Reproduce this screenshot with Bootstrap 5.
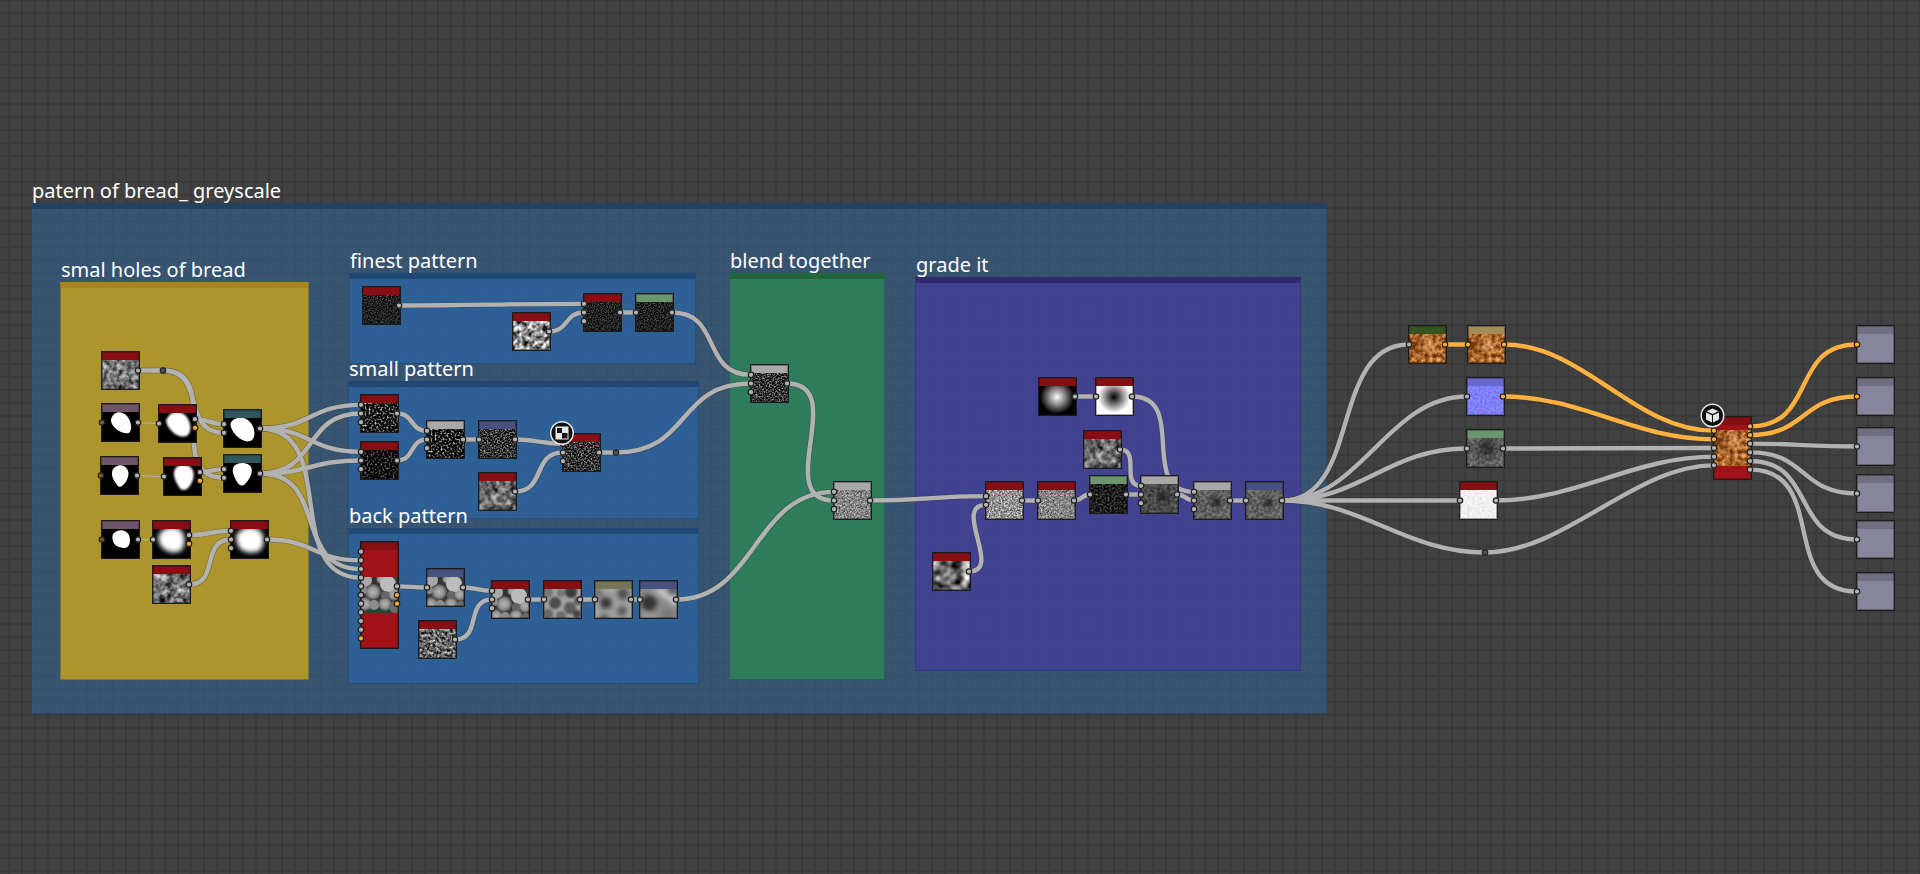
<!DOCTYPE html>
<html lang="en">
<head>
<meta charset="utf-8">
<meta name="viewport" content="width=device-width, initial-scale=1">
<title>Bread material graph</title>
<link href="https://cdn.jsdelivr.net/npm/bootstrap@5.3.0/dist/css/bootstrap.min.css" rel="stylesheet">
<style>
  body { background: #414141; font-family: "Noto Sans", "Open Sans", sans-serif; }
  .graph {
    min-height: 100vh;
    background-color: #414141;
    background-image:
      linear-gradient(90deg, #3a3a3a 2px, transparent 2px),
      linear-gradient(#3a3a3a 2px, transparent 2px);
    background-size: 13px 13px;
    background-position: 8px 12px;
  }
  .graph-frame { position: absolute; }
  .graph-frame h2 {
    position: absolute; bottom: 100%; left: 1px;
    font-size: 20px; line-height: 24px; color: #fff; white-space: nowrap;
    font-weight: 400;
  }
  .frame-body { background: var(--fill); border: 1px solid rgba(20, 40, 70, .3); border-top: 6px solid var(--head); }
  .tone-outer  { --fill: rgba(46, 104, 162, .5); --head: #24415f; }
  .tone-blue   { --fill: rgba(41, 105, 173, .6); --head: #1f4974; }
  .tone-yellow { --fill: rgba(202, 165, 29, .8); --head: #a68716; }
  .tone-green  { --fill: rgba(44, 143, 84, .7);  --head: #23663c; }
  .tone-purple { --fill: rgba(68, 62, 154, .8);  --head: #30296f; }
  .wire-layer { position: absolute; inset: 0; width: 100%; height: 100%; pointer-events: none; }
  .graph-node { position: absolute; width: 39px; border: 1px solid #1c1c1c; outline: 1px solid rgba(20, 20, 20, .35); outline-offset: -2px; }
  .node-head { height: 8px; }
  .node-view { height: 29px; }
  .node-view svg { display: block; width: 100%; height: 100%; }
  .node-tall { background: #a31218; }
  .node-tall .node-view { height: 36px; }
</style>
</head>
<body>
<main class="graph position-relative overflow-hidden" id="graph">
  <svg width="0" height="0" class="position-absolute" aria-hidden="true"><defs id="filters">
    <filter id="soft1" x="-50%" y="-50%" width="200%" height="200%"><feGaussianBlur stdDeviation="0.5"/></filter>
    <filter id="soft2" x="-50%" y="-50%" width="200%" height="200%"><feGaussianBlur stdDeviation="1"/></filter>
    <filter id="soft3" x="-50%" y="-50%" width="200%" height="200%"><feGaussianBlur stdDeviation="2.4"/></filter>
    <radialGradient id="ball"><stop offset="0" stop-color="#fff"/><stop offset="1" stop-color="#000"/></radialGradient>
    <radialGradient id="hole"><stop offset="0" stop-color="#000"/><stop offset="1" stop-color="#fff"/></radialGradient>
    <radialGradient id="bump"><stop offset="0" stop-color="#b4b4b4"/><stop offset=".6" stop-color="#949494"/><stop offset="1" stop-color="#4c4c4c"/></radialGradient>
    <radialGradient id="dusk"><stop offset="0" stop-color="#111" stop-opacity=".7"/><stop offset="1" stop-color="#111" stop-opacity="0"/></radialGradient>
  </defs></svg>
</main>

<script src="https://cdn.jsdelivr.net/npm/bootstrap@5.3.0/dist/js/bootstrap.bundle.min.js"></script>
<script>
const graph = document.getElementById('graph');
const R = '#870f14';

/* frames: title, tone, left, top, width, height */
const frames = [
  ['patern of bread_ greyscale', 'outer', 31, 203, 1296, 511],
  ['smal holes of bread', 'yellow', 60, 282, 249, 398],
  ['finest pattern', 'blue', 349, 273, 347, 91],
  ['small pattern', 'blue', 348, 381, 351, 138],
  ['back pattern', 'blue', 348, 528, 351, 156],
  ['blend together', 'green', 729, 273, 156, 407],
  ['grade it', 'purple', 915, 277, 386, 394]
];
for (const [title, tone, x, y, w, h] of frames) {
  graph.insertAdjacentHTML('beforeend',
    `<section class="graph-frame tone-${tone}" style="left:${x}px;top:${y}px;width:${w}px;height:${h}px">
       <h2 class="m-0">${title}</h2><div class="frame-body h-100"></div></section>`);
}

/* noise textures: base frequency, octaves, gain, mean grey, seed */
const noises = {
  cloud:   [.2, 4, 1.1, .45, 3],
  cloud2:  [.14, 4, 1.4, .45, 8],
  cloud3:  [.16, 4, 1.1, .42, 21],
  fine:    [.35, 4, 1.4, .4, 5],
  patch:   [.2, 2, 1.9, .55, 11],
  large:   [.1, 2, 1.7, .45, 4],
  dust:    [.7, 2, .7, .13, 2],
  spark:   [.5, 2, 2.4, .1, 6],
  sparkLo: [.5, 2, 1.5, .05, 9],
  spots:   [.6, 2, 1.6, .2, 7],
  grain:   [.6, 3, 1.1, .58, 12],
  grainLo: [.6, 3, .95, .52, 14],
  night:   [.5, 4, .8, .12, 15],
  slate:   [.3, 4, .45, .3, 16],
  slateHi: [.3, 4, .45, .38, 18],
  paper:   [.4, 3, .2, .94, 19]
};
const filters = document.getElementById('filters');
const addNoise = (id, freq, oct, seed, matrix) => filters.insertAdjacentHTML('beforeend',
  `<filter id="${id}" x="0" y="0" width="100%" height="100%" color-interpolation-filters="sRGB">
     <feTurbulence type="fractalNoise" baseFrequency="${freq}" numOctaves="${oct}" seed="${seed}"/>
     <feColorMatrix values="${matrix}"/></filter>`);
for (const [id, [f, o, g, mean, s]] of Object.entries(noises)) {
  const row = `${g} 0 0 0 ${mean - g / 2} `;
  addNoise(id, f, o, s, row + row + row + '0 0 0 0 1');
}
addNoise('crust', .25, 5, 24, '.9 0 0 0 .22  .85 0 0 0 -.02  .7 0 0 0 -.17  0 0 0 0 1');
addNoise('normal', .5, 2, 25, '.4 0 0 0 .3  0 .4 0 0 .3  0 0 0 0 .97  0 0 0 0 1');

const tex = (id, over = '') => `<rect width="37" height="36" filter="url(#${id})"/>${over}`;
const shape = (d, f) => `<rect width="37" height="29"/><path d="${d}" fill="#fff" ${f ? `filter="url(#${f})"` : ''}/>`;
const vig = (x, y, r) => `<circle cx="${x}" cy="${y}" r="${r}" fill="url(#dusk)"/>`;
const discs = (list, f) => `<g filter="url(#${f})">` + list.map(([x, y, r, c]) =>
  `<circle cx="${x}" cy="${y}" r="${r}" fill="${c || 'url(#bump)'}"/>`).join('') + '</g>';
const bumps = '<rect width="37" height="36" fill="#3a3a3a"/>' + discs([
  [4, 3, 7, '#a8a8a8'], [15, 4, 4, '#303030'], [33, 17, 7], [20, 2, 5], [4, 27, 7], [12, 15, 8],
  [24, 27, 7], [27, 7, 8, '#bcbcbc'], [13, 28, 5, '#8c8c8c'], [34, 30, 6, '#6c6c6c'],
  [2, 13, 4, '#8a8a8a'], [24, 18, 4, '#666']], 'soft1');
const views = {
  tilt: shape('M10 5C13-1 20-1 25 4C29 9 31 17 27 21C23 22 17 20 13 16C9 12 8 8 10 5Z'),
  tiltSoft: shape('M9 4C13-3 22-2 27 3C32 9 33 18 29 22C24 26 15 22 11 16C7 11 6 7 9 4Z', 'soft2'),
  tiltEdge: shape('M8 3C13-2 22-1 26 4C31 9 32 19 28 22C23 26 15 21 11 16C7 11 5 6 8 3Z', 'soft1'),
  drop: shape('M12 4C16-1 23-1 26 4C29 8 27 14 24 18C21 22 18 23 16 20C13 16 9 10 12 4Z'),
  dropSoft: shape('M11 3C15-3 25-2 28 3C32 9 28 18 25 21C22 25 17 25 15 21C12 16 8 9 11 3Z', 'soft2'),
  dropEdge: shape('M10 3C14-1 24-1 27 4C30 10 24 18 21 21C18 24 15 22 13 19C10 13 7 8 10 3Z', 'soft1'),
  dome: shape('M12 4C16 0 24 0 27 6C29 12 28 18 23 19C18 19 12 17 11 12C10 8 10 6 12 4Z'),
  domeSoft: shape('M8 3C14-4 26-3 30 4C33 11 32 21 25 23C17 25 8 20 6 13C5 8 5 6 8 3Z', 'soft3'),
  domeWide: shape('M8 3C14-4 26-3 31 4C34 11 33 21 26 23C17 25 7 22 6 13C4 8 5 6 8 3Z', 'soft3'),
  ball: '<rect width="37" height="29"/><circle cx="18" cy="11" r="17" fill="url(#ball)"/>',
  hole: '<rect width="37" height="29" fill="#fff"/><circle cx="18" cy="11" r="16" fill="url(#hole)"/>',
  bumps,
  webs: '<rect width="37" height="29" fill="#a0a0a0"/>' + discs([[3, 3, 6, '#777'], [11, 14, 6, '#4d4d4d'], [27, 3, 6, '#3c3c3c'], [26, 19, 6, '#5a5a5a'], [4, 25, 5, '#666'], [17, 27, 5, '#6c6c6c'], [34, 12, 4, '#5a5a5a'], [33, 25, 4, '#444'], [17, 4, 4, '#777']], 'soft2'),
  haze: '<rect width="37" height="29" fill="#a2a2a2"/>' + discs([[1, 4, 7, '#777'], [11, 14, 6, '#333'], [28, 5, 6, '#4d4d4d'], [27, 22, 5, '#555'], [9, 29, 4, '#555']], 'soft3'),
  fog: '<rect width="37" height="29" fill="#8a8a8a"/><g filter="url(#soft3)"><path d="M12 0L37 18V8L24 0ZM0 25L20 29H10Z" fill="#ccc"/><circle cx="9" cy="14" r="8" fill="#333"/><circle cx="32" cy="2" r="5" fill="#555"/><circle cx="28" cy="26" r="6" fill="#777"/></g>',
  slateA: tex('slate', vig(22, 13, 10)),
  slateB: tex('slateHi', vig(22, 12, 9)),
  slateC: tex('slateHi', vig(22, 13, 8)),
  pit: tex('slateHi', vig(20, 10, 15)),
  crustA: tex('crust', '<circle cx="6" cy="13" r="8" fill="#5a2400" opacity=".4" filter="url(#soft3)"/><circle cx="20" cy="12" r="7" fill="#ffc890" opacity=".35" filter="url(#soft3)"/>'),
  none: ''
};

/* port spacing is one third of 26 */
const STEP = 26 / 3, MID = 19.5;
/* nodes: id, x, y, header, view, input colours, output colours (g grey, o orange, b brown) */
const nodes = [
  ['a', 101, 351, R, 'cloud', '', 'g'],
  ['b1', 101, 403, '#6e5468', 'tilt', 'b', 'g'],
  ['c1', 158, 404, R, 'tiltSoft', 'g', 'go'],
  ['d1', 223, 409, '#2f575b', 'tiltEdge', 'gg', 'g'],
  ['b2', 100, 456, '#6e5468', 'drop', 'b', 'g'],
  ['c2', 163, 457, R, 'dropSoft', 'g', 'go'],
  ['d2', 223, 454, '#2f575b', 'dropEdge', 'gg', 'g'],
  ['b3', 101, 520, '#6e5468', 'dome', 'b', 'g'],
  ['c3', 152, 520, R, 'domeSoft', 'g', 'go'],
  ['e', 230, 520, R, 'domeWide', 'ggg', 'g'],
  ['f', 152, 565, R, 'cloud2', '', 'g'],
  ['g', 362, 286, R, 'dust', '', 'g'],
  ['h', 512, 312, R, 'patch', '', 'g'],
  ['i', 583, 293, R, 'dust', 'ggg', 'g'],
  ['j', 635, 293, '#6d956e', 'dust', 'g', 'g'],
  ['k', 360, 394, R, 'spark', 'ggg', 'g'],
  ['l', 360, 441, R, 'sparkLo', 'ggg', 'g'],
  ['m', 426, 420, '#a8a8a8', 'spark', 'ggg', 'g'],
  ['n', 478, 420, '#475280', 'spots', 'g', 'g'],
  ['o', 478, 472, R, 'cloud3', '', 'g'],
  ['p', 562, 433, R, 'spots', 'ggg', 'g'],
  ['q', 360, 541, '#850f13', 'bumps', 'ggggggggggo', 'goo', 108],
  ['r', 426, 568, '#475280', 'bumps', 'g', 'g'],
  ['s', 418, 620, R, 'fine', '', 'g'],
  ['t', 491, 580, R, 'bumps', 'ggg', 'g'],
  ['u', 543, 580, R, 'webs', 'g', 'g'],
  ['v', 594, 580, '#78745a', 'haze', 'g', 'g'],
  ['w', 639, 580, '#475280', 'fog', 'g', 'g'],
  ['x', 750, 364, '#a8a8a8', 'spots', 'ggg', 'g'],
  ['y', 833, 481, '#a8a8a8', 'grainLo', 'ggg', 'g'],
  ['z', 985, 481, R, 'grain', 'gg', 'g'],
  ['aa', 1037, 481, R, 'grainLo', 'g', 'g'],
  ['ab', 1089, 475, '#6d956e', 'night', 'g', 'g'],
  ['ac', 1140, 475, '#a8a8a8', 'slateA', 'ggg', 'g'],
  ['ad', 1193, 481, '#a8a8a8', 'slateB', 'ggg', 'g'],
  ['ae', 1245, 481, '#475280', 'slateC', 'g', 'g'],
  ['af', 932, 552, R, 'large', '', 'g'],
  ['ag', 1083, 430, R, 'cloud3', '', 'g'],
  ['ah', 1038, 377, R, 'ball', '', 'g'],
  ['ai', 1095, 377, R, 'hole', 'g', 'g'],
  ['ba', 1408, 325, '#35541f', 'crustA', 'g', 'o'],
  ['bb', 1467, 325, '#a48c58', 'crustA', 'o', 'o'],
  ['bc', 1466, 377, '#6868cf', 'normal', 'g', 'o'],
  ['bd', 1466, 429, '#6d956e', 'pit', 'g', 'g'],
  ['be', 1459, 481, R, 'paper', 'g', 'g'],
  ['ca', 1713, 416, '#850f13', 'crustA', 'ooggg', 'oogggg', 64],
  ['o1', 1856, 325, '#706f82', 'none', 'o', ''],
  ['o2', 1856, 377, '#706f82', 'none', 'o', ''],
  ['o3', 1856, 427, '#706f82', 'none', 'g', ''],
  ['o4', 1856, 474, '#706f82', 'none', 'g', ''],
  ['o5', 1856, 520, '#706f82', 'none', 'g', ''],
  ['o6', 1856, 572, '#706f82', 'none', 'g', '']
];

const port = {};
const ports = [];
const place = (id, side, kinds, x, mid) => [...kinds].forEach((kind, i) => {
  const y = mid + (i - (kinds.length - 1) / 2) * STEP;
  port[id + side + (i + 1)] = [x, y];
  ports.push([x, y, kind]);
});
let nodeHtml = '';
for (const [id, x, y, head, view, ins, outs, tall] of nodes) {
  const mid = y + (tall ? tall / 2 : MID);
  place(id, '<', ins, x + 1, mid);
  place(id, '>', outs, x + 37, id === 'q' ? mid : mid);
  const svg = views[view] ?? tex(view);
  const flow = tall ? ' node-tall d-flex flex-column justify-content-between' : '';
  nodeHtml += `<div class="graph-node${flow}" style="left:${x}px;top:${y}px;${tall ? `height:${tall}px;` : ''}${view === 'none' ? 'background:#87859b;' : ''}">
    <div class="node-head" style="background:${head}"></div>
    <div class="node-view"><svg viewBox="0 0 37 ${tall ? 36 : 29}" aria-hidden="true">${svg}</svg></div>
    ${tall ? '<div class="node-head"></div>' : ''}</div>`;
}
/* loose relay dots on the wires */
for (const [id, x, y] of [['dotA', 163, 370.5], ['dotB', 616, 452.5], ['dotC', 1485, 552.5]]) {
  port[id] = [x, y];
  ports.push([x, y, 'd']);
}

const links = `a>1 dotA; dotA d1<2; dotA d2<2; c1>1 d1<1; c2>1 d2<1; c3>1 e<1; f>1 e<2;
  d1>1 k<1; d1>1 l<1; d1>1 q<4; d2>1 k<2; d2>1 l<2; d2>1 q<3; e>1 q<2;
  g>1 i<1; h>1 i<2; i>1 j<1; j>1 x<1; k>1 m<1; l>1 m<2; m>1 n<1; n>1 p<1; o>1 p<2; p>1 dotB; dotB x<2;
  q>1 r<1; r>1 t<1; s>1 t<2; t>1 u<1; u>1 v<1; v>1 w<1; w>1 y<1; x>1 y<2; y>1 z<1; af>1 z<2;
  z>1 aa<1; aa>1 ab<1; ab>1 ac<2; ag>1 ac<1; ac>1 ad<2; ai>1 ad<1; ah>1 ai<1; ad>1 ae<1;
  ae>1 ba<1; ae>1 bc<1; ae>1 bd<1; ae>1 be<1; ae>1 dotC; ba>1 bb<1 o; bb>1 ca<1 o; bc>1 ca<2 o;
  bd>1 ca<3; be>1 ca<4; dotC ca<5; ca>1 o1<1 o; ca>2 o2<1 o; ca>3 o3<1; ca>4 o4<1; ca>5 o5<1; ca>6 o6<1;
  b1>1 c1<1 t; b2>1 c2<1 t; b3>1 c3<1 t`;
let shade = '', line = '';
for (const link of links.split(';')) {
  const [from, to, kind] = link.trim().split(' ');
  const [x1, y1] = port[from], [x2, y2] = port[to];
  const c = Math.min(80, Math.hypot(x2 - x1, y2 - y1) / 2);
  const d = `M${x1} ${y1}C${x1 + c} ${y1} ${x2 - c} ${y2} ${x2} ${y2}`;
  const thin = kind === 't';
  if (!thin) shade += `<path d="${d}" stroke="#333" stroke-opacity=".35" stroke-width="5.8"/>`;
  line += `<path d="${d}" stroke="${kind === 'o' ? '#ffb140' : '#b2b2b2'}" stroke-width="${thin ? 1.2 : 4.4}"/>`;
}
const fill = { g: '#b4b4b4', o: '#ffb030', b: '#7a5a2c', d: '#555' };
const dots = ports.map(([x, y, k]) =>
  `<circle cx="${x}" cy="${y}" r="2.7" fill="${fill[k]}" stroke="#222" stroke-width="1.2"/>`).join('');
const disc = (x, y) => `<circle cx="${x}" cy="${y}" r="11.3" fill="#111" stroke="#e8e8e8" stroke-width="1.4"/>`;
const badges = disc(562, 433) +
  `<path d="M555.500 426.500h13v13h-13z" fill="#e6e6e6"/><path d="M557 428h5v5h-5zM562 433h5.500v5.500H562z" fill="#151515"/>` +
  disc(1712.500, 415.500) +
  `<path d="M1712.500 408.500l6 2.700-6 2.700-6-2.700zM1706 412.500l6 2.700v7.300l-6-3zM1719 412.500l-6 2.700v7.300l6-3z" fill="#e6e6e6"/>`;

graph.insertAdjacentHTML('beforeend',
  `<svg class="wire-layer" fill="none" aria-hidden="true">${shade}${line}</svg>${nodeHtml}
   <svg class="wire-layer" aria-hidden="true">${dots}${badges}</svg>`);
</script>
</body>
</html>
